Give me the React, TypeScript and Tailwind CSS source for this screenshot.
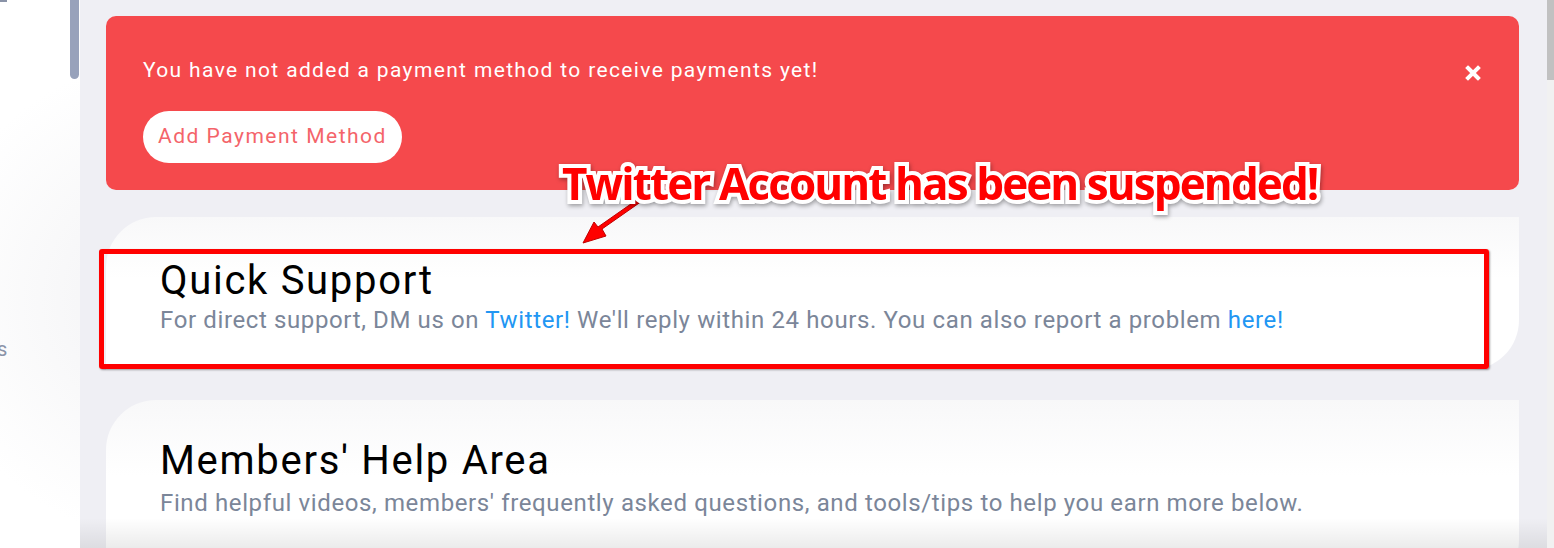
import React from "react";

const font = "font-['Roboto',sans-serif]";

function Sidebar() {
    return (
        <div className="relative w-[80px] h-[548px] bg-[radial-gradient(circle_at_170px_300px,#f2f2f4_0%,#ffffff_70%)] shrink-0">
            <div className="absolute left-0 top-0 w-[7px] h-[2px] bg-[#8a93a8]" />
            <span className={`absolute left-[-3px] top-[334px] text-[20px] text-[#8a93a8] ${font}`}>s</span>
            <div className="absolute right-[1px] top-0 w-[9px] h-[79px] rounded-b-full bg-[#98a2bb]" />
        </div>
    );
}

function Alert() {
    return (
        <div className="relative bg-[#f5494c] rounded-[10px] h-[174px] pl-[37px] pt-[40px]">
            <p className={`text-white text-[21px] leading-[28px] tracking-[1.35px] ${font}`}>
                You have not added a payment method to receive payments yet!
            </p>
            <button className={`mt-[27px] h-[52px] px-[15px] rounded-full bg-white text-[#f4646a] text-[21px] tracking-[1.5px] ${font}`}>
                Add Payment Method
            </button>
            <svg className="absolute right-[38px] top-[49px]" width="16" height="16" viewBox="0 0 16 16">
                <path d="M3 3 L13 13 M13 3 L3 13" stroke="white" strokeWidth="4" strokeLinecap="square" />
            </svg>
        </div>
    );
}

function Card({ title, children, cls, sub }: { title: string; children: React.ReactNode; cls: string; sub: string }) {
    return (
        <div className={`bg-[linear-gradient(180deg,#f8f8f9_0%,#ffffff_40%)] rounded-tl-[50px] rounded-br-[50px] pl-[54px] ${cls}`}>
            <h2 className={`text-[40px] leading-[48px] tracking-[1.7px] text-black ${font}`}>{title}</h2>
            <p className={`text-[24px] leading-[28px] tracking-[0.62px] text-[#7b8699] ${font} ${sub}`}>{children}</p>
        </div>
    );
}

export default function App() {
    return (
        <div className="flex w-[1554px] h-[548px] overflow-hidden bg-white">
            <Sidebar />
            <div className="relative flex-1 bg-[#efeff4] pl-[26px] pr-[28px] pt-[16px]">
                <Alert />
                <Card title="Quick Support" cls="mt-[27px] h-[153px] pt-[40px]" sub="mt-[1px]">
                    For direct support, DM us on <span className="text-[#2196f3]">Twitter!</span> We'll reply within 24
                    hours. You can also report a problem <span className="text-[#2196f3]">here!</span>
                </Card>
                <Card title="Members' Help Area" cls="mt-[30px] h-[190px] pt-[37px]" sub="mt-[4px]">
                    Find helpful videos, members' frequently asked questions, and tools/tips to help you earn more below.
                </Card>
                {/* bottom fade */}
                <div className="absolute left-0 right-0 bottom-0 h-[30px] bg-[linear-gradient(180deg,rgba(0,0,0,0)_0%,rgba(0,0,0,0.08)_100%)]" />

                {/* annotation overlay */}
                <div className="absolute left-[19px] top-[249px] w-[1390px] h-[120px] border-[5px] border-[#ff0000] rounded-[3px] shadow-[1px_1px_2px_rgba(0,0,0,0.4)]" />
                <svg className="absolute left-[500px] top-[196px]" width="66" height="52" viewBox="0 0 66 52">
                    <path d="M62 5 L22 33 L26 40 L3 47 L14 26 L18 31 L58 3 Z" fill="#ff0000" stroke="#c00000" strokeWidth="1" />
                </svg>
                <div
                    className={`absolute left-[482px] top-[150px] text-[44px] font-bold text-[#ff0000] font-['Open_Sans',sans-serif] tracking-[-1.9px] [-webkit-text-stroke:8px_white] [paint-order:stroke_fill] drop-shadow-[1px_2px_2px_rgba(0,0,0,0.35)]`}
                >
                    Twitter Account has been suspended!
                </div>
            </div>
            <div className="w-[7px] h-[548px] bg-[#f1f1f1] shrink-0">
                <div className="w-[7px] h-[80px] bg-[#c1c1c1]" />
            </div>
        </div>
    );
}
